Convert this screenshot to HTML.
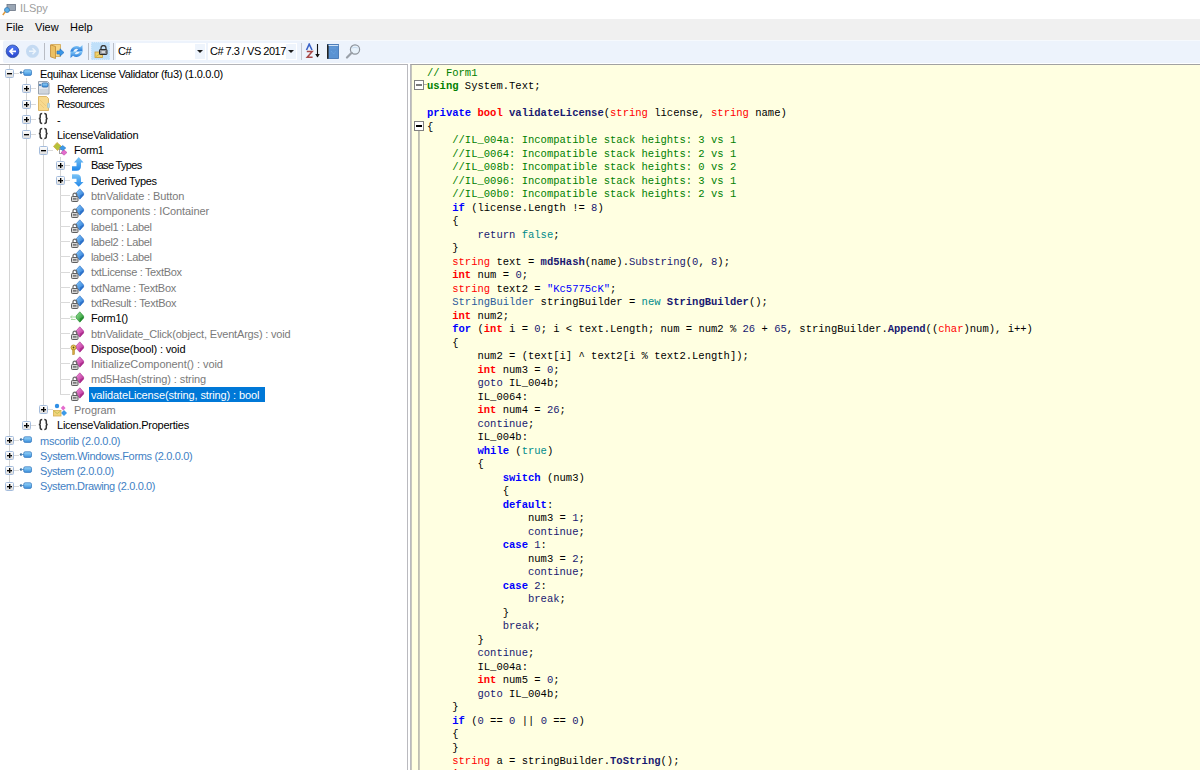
<!DOCTYPE html>
<html><head><meta charset="utf-8">
<style>
html,body{margin:0;padding:0;width:1200px;height:770px;overflow:hidden;background:#fff;}
body{position:relative;font-family:"Liberation Sans",sans-serif;}
.abs{position:absolute;}
#title{position:absolute;left:0;top:0;width:1200px;height:19px;background:#fff;}
#title .t{position:absolute;left:20px;top:2px;font-size:11px;color:#a0a0a0;letter-spacing:-0.1px;}
#menu{position:absolute;left:0;top:19px;width:1200px;height:21px;background:#f0f0f0;}
#menu span{position:absolute;top:2px;font-size:11px;color:#000;}
#tb{position:absolute;left:3px;top:40px;width:1197px;height:23px;background:#edf3fc;border-top:1px solid #f6f9fd;box-sizing:border-box;border-radius:2px 0 0 2px;}
.sep{position:absolute;top:43px;width:1px;height:17px;background:#b8bcc4;}
.combo{position:absolute;top:43px;height:17px;background:#fff;}
.combo .dd{position:absolute;right:1px;top:1px;width:10px;height:15px;background:#eef4fc;}
.combo .dd:after{content:"";position:absolute;left:2px;top:6px;border-left:3px solid transparent;border-right:3px solid transparent;border-top:3px solid #1e1e1e;}
.combo .ct{position:absolute;left:2px;top:2px;font-size:11px;color:#000;letter-spacing:-0.5px;white-space:nowrap;}
#treep{position:absolute;left:0;top:64px;width:408px;height:706px;background:#fff;border-top:1px solid #b4b4b8;border-right:1px solid #bababf;box-sizing:border-box;}
#codep{position:absolute;left:410px;top:64px;width:790px;height:706px;background:#ffffe1;border-top:1px solid #a2a2a2;border-left:1px solid #b8b8be;box-sizing:border-box;box-shadow:inset 1px 0 0 #c6c6bc;}
.cl{position:absolute;white-space:pre;font-family:"Liberation Mono",monospace;font-size:10.52px;line-height:0;color:#000;}
.c{color:#008000}
.u{color:#008000;font-weight:bold}
.k{color:#0000ff;font-weight:bold}
.t{color:#ff0000}
.tb{color:#ff0000;font-weight:bold}
.n{color:#191970}
.num{color:#191970}
.tl{color:#008b8b}
.m{color:#191970;font-weight:bold}
.mn{color:#191970}
.ty{color:#2b5b9b}
.s{color:#0000ff}
.fold{position:absolute;width:8px;height:8px;border:1px solid #808080;background:#fff;}
.fold i{position:absolute;left:1px;top:3px;width:6px;height:1.5px;background:#000;}
.vl{position:absolute;width:1px;background:#d4d4d4;}
.hl{position:absolute;height:1px;background:#dadada;}
.exp{position:absolute;width:7px;height:7px;border:1px solid #a4bcdc;border-radius:1.5px;background:linear-gradient(#fdfdfd,#dedede);}
.exp .h{position:absolute;left:1px;top:3px;width:5px;height:1px;background:#000;box-shadow:0 0.5px 0 #444;}
.exp .v{position:absolute;left:3px;top:1px;width:1px;height:5px;background:#000;box-shadow:0.5px 0 0 #444;}
.ic{position:absolute;}
.nsi{position:absolute;font-family:"Liberation Mono",monospace;font-weight:bold;font-size:12px;line-height:14px;color:#333;letter-spacing:-1px;}
.tt{position:absolute;white-space:pre;font-size:11px;line-height:14px;letter-spacing:-0.3px;}
.blk{color:#000}
.gry{color:#7a7a7a}
.asmc{color:#3f7fc4}
.sel{color:#fff;z-index:2;}
.selbg{position:absolute;background:#0078d7;z-index:1;}
</style></head><body>
<svg width="0" height="0" style="position:absolute"><defs>
<linearGradient id="gb" x1="0" y1="0" x2="1" y2="1"><stop offset="0" stop-color="#8fd0fa"/><stop offset="1" stop-color="#1f6fd6"/></linearGradient>
<linearGradient id="gp" x1="0" y1="0" x2="1" y2="1"><stop offset="0" stop-color="#f59ae0"/><stop offset="1" stop-color="#b01f8e"/></linearGradient>
<linearGradient id="gg" x1="0" y1="0" x2="1" y2="1"><stop offset="0" stop-color="#9be39a"/><stop offset="1" stop-color="#138a1e"/></linearGradient>
<linearGradient id="ga" x1="0" y1="0" x2="0" y2="1"><stop offset="0" stop-color="#9ad8fb"/><stop offset="1" stop-color="#3b8fdc"/></linearGradient>
<linearGradient id="gar" x1="0" y1="0" x2="0" y2="1"><stop offset="0" stop-color="#7cc4f6"/><stop offset="1" stop-color="#1f86e8"/></linearGradient>
</defs></svg>
<div id="title">
 <svg class="abs" style="left:2px;top:4px" width="14" height="12" viewBox="0 0 14 12">
  <rect x="5" y="0.5" width="8.5" height="6" fill="#9aa6b4" stroke="#6b7684" stroke-width=".8"/>
  <circle cx="5" cy="6" r="2.5" fill="#5fb0e8" stroke="#3a78b0" stroke-width=".8"/>
  <line x1="3.2" y1="7.8" x2="0.8" y2="11" stroke="#e09a3a" stroke-width="1.5"/>
 </svg>
 <div class="t">ILSpy</div>
</div>
<div id="menu">
 <span style="left:6px">File</span>
 <span style="left:35px">View</span>
 <span style="left:70px">Help</span>
</div>
<div id="tb"></div>
<!-- toolbar icons -->
<svg class="abs" style="left:5px;top:44px" width="16" height="15" viewBox="0 0 16 15">
 <defs><linearGradient id="bk" x1="0" y1="0" x2="0" y2="1"><stop offset="0" stop-color="#4f78f2"/><stop offset="1" stop-color="#2a48d0"/></linearGradient></defs>
 <circle cx="7.5" cy="7.3" r="6.3" fill="url(#bk)" stroke="#2a4aa0" stroke-width=".8"/>
 <path d="M11 7.3 H5 M8 4.3 L5 7.3 L8 10.3" fill="none" stroke="#fff" stroke-width="1.7"/>
</svg>
<svg class="abs" style="left:25px;top:44px" width="16" height="15" viewBox="0 0 16 15">
 <circle cx="7.5" cy="7.3" r="6.5" fill="#c4daf2"/>
 <path d="M4 7.3 H10 M7.5 4.3 L10.5 7.3 L7.5 10.3" fill="none" stroke="#eef5fc" stroke-width="1.4"/>
</svg>
<div class="sep" style="left:44px"></div>
<svg class="abs" style="left:50px;top:44px" width="15" height="15" viewBox="0 0 15 15">
 <path d="M1.5 0.5 H10.5 V12.5 H1.5 Z" fill="#f7d584" stroke="#d2a54e" stroke-width=".8"/>
 <path d="M0.5 0.8 L5.5 2.5 V14.5 L0.5 12.8 Z" fill="#ecc062" stroke="#c08a36" stroke-width=".8"/>
 <path d="M7 7 H10 V4.8 L14 8.5 L10 12.2 V10 H7 Z" fill="#3a96e6" stroke="#1f6cc0" stroke-width=".6"/>
</svg>
<svg class="abs" style="left:69px;top:44px" width="15" height="15" viewBox="0 0 15 15">
 <defs><linearGradient id="rf" x1="0" y1="0" x2="0" y2="1"><stop offset="0" stop-color="#8fd0fb"/><stop offset="1" stop-color="#1c72d6"/></linearGradient></defs>
 <path d="M1.5 8 A6 6 0 0 1 11 3.2 L13.5 1 V7.5 H7 L9.2 5.3 A3.2 3.2 0 0 0 4.3 8 Z" fill="url(#rf)"/>
 <path d="M13.5 7 A6 6 0 0 1 4 11.8 L1.5 14 V7.5 H8 L5.8 9.7 A3.2 3.2 0 0 0 10.7 7 Z" fill="url(#rf)"/>
</svg>
<div class="sep" style="left:88px"></div>
<div class="abs" style="left:91px;top:42px;width:19px;height:18px;background:#c0e0fa;border:1px dotted #d6eafc;box-sizing:border-box;"></div>
<svg class="abs" style="left:94px;top:45px" width="14" height="14" viewBox="0 0 14 14">
 <rect x="1" y="7" width="7.5" height="5.5" fill="#f2d070" stroke="#c79a36" stroke-width=".8"/>
 <path d="M2 11.5 L7 8" stroke="#b8c040" stroke-width=".8"/>
 <path d="M7 4.5 V3 a2.5 2.5 0 0 1 5 0 V4.5" fill="none" stroke="#3a3a3a" stroke-width="1.3"/>
 <rect x="5.5" y="4.5" width="7.5" height="5" rx=".6" fill="#8e9298" stroke="#2e2e2e" stroke-width="1"/>
 <rect x="7.5" y="6.2" width="3.5" height="1.6" fill="#e8e8e8"/>
</svg>
<div class="sep" style="left:113px"></div>
<div class="combo" style="left:116px;width:90px"><div class="ct">C#</div><div class="dd"></div></div>
<div class="combo" style="left:208px;width:89px"><div class="ct">C# 7.3 / VS 2017</div><div class="dd"></div></div>
<div class="sep" style="left:301px;background:#c4c8d0"></div>
<svg class="abs" style="left:305px;top:43px" width="17" height="16" viewBox="0 0 17 16">
 <path d="M1.5 7 L4.2 1.2 L7 7" fill="none" stroke="#3a62c8" stroke-width="1.6"/>
 <path d="M1.8 8.5 H7.2 L2.2 14.2 H7.6" fill="none" stroke="#a84848" stroke-width="1.5"/>
 <path d="M12.5 1 V14" stroke="#111" stroke-width="1.1"/>
 <path d="M10.2 11 L12.5 14.6 L14.8 11 Z" fill="#111"/>
</svg>
<svg class="abs" style="left:326px;top:44px" width="14" height="15" viewBox="0 0 14 15">
 <rect x="1.5" y="0.5" width="11" height="14" fill="#5a92d2" stroke="#3a6eae" stroke-width=".8"/>
 <rect x="1" y="0.5" width="1.6" height="14.2" fill="#222"/>
 <rect x="2.6" y="1" width="9.6" height="1" fill="#cfe2f6"/>
 <path d="M4.5 4 H10.5 M5 7 L7.5 10 L10 7" fill="none" stroke="#79b0ea" stroke-width=".7" stroke-dasharray="1 1"/>
</svg>
<svg class="abs" style="left:345px;top:43px" width="17" height="16" viewBox="0 0 17 16">
 <circle cx="10" cy="6.5" r="4.6" fill="#e8f2fb" stroke="#8e949c" stroke-width="1.2"/>
 <path d="M7.2 5 Q10 3.5 12.8 5" fill="none" stroke="#c8dcf0" stroke-width="1"/>
 <line x1="6.7" y1="9.8" x2="2" y2="14.5" stroke="#9aa0a8" stroke-width="2.2" stroke-linecap="round"/>
</svg>

<div id="treep"></div>
<div class="vl" style="left:60px;top:157.0px;height:237.0px"></div>
<div class="vl" style="left:43px;top:139.0px;height:270.0px"></div>
<div class="vl" style="left:26px;top:78.0px;height:347.0px"></div>
<div class="vl" style="left:9px;top:65.0px;height:421.0px"></div>
<div class="exp" style="left:5px;top:69px"><i class="h"></i></div>
<div class="hl" style="left:14px;top:73px;width:5px"></div>
<svg class="ic" style="left:19px;top:65px" width="16" height="16" viewBox="0 0 16 16"><circle cx="2" cy="7.5" r="1.2" fill="#3a6c9c"/><rect x="2.5" y="7" width="2.5" height="1" fill="#6a9ccc"/><rect x="4.7" y="4.8" width="7.8" height="5.6" rx="1.5" fill="url(#ga)" stroke="#3b7cc0" stroke-width=".8"/></svg>
<div class="tt blk" style="left:40px;top:66.80px;letter-spacing:-0.323px">Equihax License Validator (fu3) (1.0.0.0)</div>
<div class="exp" style="left:22px;top:84px"><i class="h"></i><i class="v"></i></div>
<div class="hl" style="left:31px;top:88px;width:5px"></div>
<svg class="ic" style="left:36px;top:80px" width="16" height="16" viewBox="0 0 16 16"><path d="M2.5 1.5 H11.5 L13 3 V14 H2.5 Z" fill="#e4e8ee" stroke="#98a2ae" stroke-width="1"/><rect x="3.5" y="9" width="8.5" height="4" fill="#cfd5dc"/><rect x="6" y="3" width="6" height="4" rx="1.2" fill="url(#ga)" stroke="#2c6cae" stroke-width=".9"/><circle cx="4" cy="5" r="1" fill="#2c6cae"/></svg>
<div class="tt blk" style="left:57px;top:82.08px;letter-spacing:-0.622px">References</div>
<div class="exp" style="left:22px;top:100px"><i class="h"></i><i class="v"></i></div>
<div class="hl" style="left:31px;top:104px;width:5px"></div>
<svg class="ic" style="left:36px;top:96px" width="16" height="16" viewBox="0 0 16 16"><path d="M2.5 0.5 H10.5 L12.5 2.5 V14.5 H2.5 Z" fill="#f7d98e" stroke="#dcb768" stroke-width="1"/><path d="M4 4 L10 10 M4 8 L8 12" stroke="#e9c677" stroke-width=".8"/><rect x="11.5" y="7" width="2" height="5" rx="1" fill="#b9dcea" stroke="#8fb4c4" stroke-width=".5"/></svg>
<div class="tt blk" style="left:57px;top:97.36px;letter-spacing:-0.613px">Resources</div>
<div class="exp" style="left:22px;top:115px"><i class="h"></i><i class="v"></i></div>
<div class="hl" style="left:31px;top:119px;width:5px"></div>
<svg class="ic" style="left:36px;top:111px" width="16" height="16" viewBox="0 0 16 16"><path d="M6.2 2.5 Q4.2 2.5 4.2 4.5 V6.5 Q4.2 7.5 2.8 7.5 Q4.2 7.5 4.2 8.5 V10.5 Q4.2 12.5 6.2 12.5" fill="none" stroke="#333" stroke-width="1.5"/><path d="M8.3 2.5 Q10.3 2.5 10.3 4.5 V6.5 Q10.3 7.5 11.7 7.5 Q10.3 7.5 10.3 8.5 V10.5 Q10.3 12.5 8.3 12.5" fill="none" stroke="#333" stroke-width="1.5"/></svg>
<div class="tt blk" style="left:57px;top:112.64px;letter-spacing:-0.300px">-</div>
<div class="exp" style="left:22px;top:130px"><i class="h"></i></div>
<div class="hl" style="left:31px;top:134px;width:5px"></div>
<svg class="ic" style="left:36px;top:126px" width="16" height="16" viewBox="0 0 16 16"><path d="M6.2 2.5 Q4.2 2.5 4.2 4.5 V6.5 Q4.2 7.5 2.8 7.5 Q4.2 7.5 4.2 8.5 V10.5 Q4.2 12.5 6.2 12.5" fill="none" stroke="#333" stroke-width="1.5"/><path d="M8.3 2.5 Q10.3 2.5 10.3 4.5 V6.5 Q10.3 7.5 11.7 7.5 Q10.3 7.5 10.3 8.5 V10.5 Q10.3 12.5 8.3 12.5" fill="none" stroke="#333" stroke-width="1.5"/></svg>
<div class="tt blk" style="left:57px;top:127.92px;letter-spacing:-0.244px">LicenseValidation</div>
<div class="exp" style="left:39px;top:146px"><i class="h"></i></div>
<div class="hl" style="left:48px;top:150px;width:5px"></div>
<svg class="ic" style="left:53px;top:142px" width="16" height="16" viewBox="0 0 16 16"><path d="M4 0.5 L8.5 4.5 L4.5 8.5 L0.5 4.5 Z" fill="#b5c23a" stroke="#d8a84a" stroke-width=".8"/><rect x="6.5" y="7.5" width="4" height="4" fill="none" stroke="#8a8a8a" stroke-width=".8"/><path d="M9.7 3.5 L12.8 6 L9.7 8.7 L6.6 6 Z" fill="#3d9ae8" stroke="#2a78c8" stroke-width=".6"/><path d="M11 8 L14 10.5 L11 13.2 L8 10.5 Z" fill="#e46ccd" stroke="#c04aa8" stroke-width=".6"/></svg>
<div class="tt blk" style="left:74px;top:143.20px;letter-spacing:-0.450px">Form1</div>
<div class="exp" style="left:56px;top:161px"><i class="h"></i><i class="v"></i></div>
<div class="hl" style="left:65px;top:165px;width:5px"></div>
<svg class="ic" style="left:70px;top:157px" width="16" height="16" viewBox="0 0 16 16"><path d="M8.75 0 L13.5 5.5 L11 5.5 L11 9 Q11 13.7 6.5 13.7 L2 13.7 L2 9.2 L6.5 9.2 L6.5 5.5 L4 5.5 Z" fill="url(#gar)"/></svg>
<div class="tt blk" style="left:91px;top:158.48px;letter-spacing:-0.678px">Base Types</div>
<div class="exp" style="left:56px;top:176px"><i class="h"></i><i class="v"></i></div>
<div class="hl" style="left:65px;top:180px;width:5px"></div>
<svg class="ic" style="left:70px;top:172px" width="16" height="16" viewBox="0 0 16 16"><path d="M2 2.3 L6.5 2.3 Q11 2.3 11 6.8 L11 10 L13.5 10 L8.75 14.8 L4 10 L6.5 10 L6.5 6.8 L2 6.8 Z" fill="url(#gar)"/></svg>
<div class="tt blk" style="left:91px;top:173.76px;letter-spacing:-0.342px">Derived Types</div>
<div class="hl" style="left:60px;top:195px;width:10px"></div>
<svg class="ic" style="left:70px;top:187px" width="16" height="16" viewBox="0 0 16 16"><path d="M9.8 1.8 L13.6 6 L13.6 8 L9.8 12.2 L6 8 L6 6 Z" fill="url(#gb)" stroke="#1d5fb8" stroke-width=".5"/><path d="M9.8 8.4 L13.6 6.4 L13.6 8 L9.8 12.2 Z" fill="#1d5fb8" opacity=".55"/><path d="M3 9.5 V8 a1.9 1.9 0 0 1 3.8 0 V9.5" fill="none" stroke="#6a6a6a" stroke-width="1.2"/><rect x="1.5" y="9.5" width="6.5" height="5" rx=".8" fill="#d4d4d4" stroke="#5e5e5e" stroke-width="1"/><rect x="3" y="11.3" width="3.5" height="1.2" fill="#555"/></svg>
<div class="tt gry" style="left:91px;top:189.04px;letter-spacing:-0.095px">btnValidate : Button</div>
<div class="hl" style="left:60px;top:211px;width:10px"></div>
<svg class="ic" style="left:70px;top:203px" width="16" height="16" viewBox="0 0 16 16"><path d="M9.8 1.8 L13.6 6 L13.6 8 L9.8 12.2 L6 8 L6 6 Z" fill="url(#gb)" stroke="#1d5fb8" stroke-width=".5"/><path d="M9.8 8.4 L13.6 6.4 L13.6 8 L9.8 12.2 Z" fill="#1d5fb8" opacity=".55"/><path d="M3 9.5 V8 a1.9 1.9 0 0 1 3.8 0 V9.5" fill="none" stroke="#6a6a6a" stroke-width="1.2"/><rect x="1.5" y="9.5" width="6.5" height="5" rx=".8" fill="#d4d4d4" stroke="#5e5e5e" stroke-width="1"/><rect x="3" y="11.3" width="3.5" height="1.2" fill="#555"/></svg>
<div class="tt gry" style="left:91px;top:204.32px;letter-spacing:-0.073px">components : IContainer</div>
<div class="hl" style="left:60px;top:226px;width:10px"></div>
<svg class="ic" style="left:70px;top:218px" width="16" height="16" viewBox="0 0 16 16"><path d="M9.8 1.8 L13.6 6 L13.6 8 L9.8 12.2 L6 8 L6 6 Z" fill="url(#gb)" stroke="#1d5fb8" stroke-width=".5"/><path d="M9.8 8.4 L13.6 6.4 L13.6 8 L9.8 12.2 Z" fill="#1d5fb8" opacity=".55"/><path d="M3 9.5 V8 a1.9 1.9 0 0 1 3.8 0 V9.5" fill="none" stroke="#6a6a6a" stroke-width="1.2"/><rect x="1.5" y="9.5" width="6.5" height="5" rx=".8" fill="#d4d4d4" stroke="#5e5e5e" stroke-width="1"/><rect x="3" y="11.3" width="3.5" height="1.2" fill="#555"/></svg>
<div class="tt gry" style="left:91px;top:219.60px;letter-spacing:-0.346px">label1 : Label</div>
<div class="hl" style="left:60px;top:241px;width:10px"></div>
<svg class="ic" style="left:70px;top:233px" width="16" height="16" viewBox="0 0 16 16"><path d="M9.8 1.8 L13.6 6 L13.6 8 L9.8 12.2 L6 8 L6 6 Z" fill="url(#gb)" stroke="#1d5fb8" stroke-width=".5"/><path d="M9.8 8.4 L13.6 6.4 L13.6 8 L9.8 12.2 Z" fill="#1d5fb8" opacity=".55"/><path d="M3 9.5 V8 a1.9 1.9 0 0 1 3.8 0 V9.5" fill="none" stroke="#6a6a6a" stroke-width="1.2"/><rect x="1.5" y="9.5" width="6.5" height="5" rx=".8" fill="#d4d4d4" stroke="#5e5e5e" stroke-width="1"/><rect x="3" y="11.3" width="3.5" height="1.2" fill="#555"/></svg>
<div class="tt gry" style="left:91px;top:234.88px;letter-spacing:-0.346px">label2 : Label</div>
<div class="hl" style="left:60px;top:256px;width:10px"></div>
<svg class="ic" style="left:70px;top:248px" width="16" height="16" viewBox="0 0 16 16"><path d="M9.8 1.8 L13.6 6 L13.6 8 L9.8 12.2 L6 8 L6 6 Z" fill="url(#gb)" stroke="#1d5fb8" stroke-width=".5"/><path d="M9.8 8.4 L13.6 6.4 L13.6 8 L9.8 12.2 Z" fill="#1d5fb8" opacity=".55"/><path d="M3 9.5 V8 a1.9 1.9 0 0 1 3.8 0 V9.5" fill="none" stroke="#6a6a6a" stroke-width="1.2"/><rect x="1.5" y="9.5" width="6.5" height="5" rx=".8" fill="#d4d4d4" stroke="#5e5e5e" stroke-width="1"/><rect x="3" y="11.3" width="3.5" height="1.2" fill="#555"/></svg>
<div class="tt gry" style="left:91px;top:250.16px;letter-spacing:-0.346px">label3 : Label</div>
<div class="hl" style="left:60px;top:272px;width:10px"></div>
<svg class="ic" style="left:70px;top:264px" width="16" height="16" viewBox="0 0 16 16"><path d="M9.8 1.8 L13.6 6 L13.6 8 L9.8 12.2 L6 8 L6 6 Z" fill="url(#gb)" stroke="#1d5fb8" stroke-width=".5"/><path d="M9.8 8.4 L13.6 6.4 L13.6 8 L9.8 12.2 Z" fill="#1d5fb8" opacity=".55"/><path d="M3 9.5 V8 a1.9 1.9 0 0 1 3.8 0 V9.5" fill="none" stroke="#6a6a6a" stroke-width="1.2"/><rect x="1.5" y="9.5" width="6.5" height="5" rx=".8" fill="#d4d4d4" stroke="#5e5e5e" stroke-width="1"/><rect x="3" y="11.3" width="3.5" height="1.2" fill="#555"/></svg>
<div class="tt gry" style="left:91px;top:265.44px;letter-spacing:-0.353px">txtLicense : TextBox</div>
<div class="hl" style="left:60px;top:287px;width:10px"></div>
<svg class="ic" style="left:70px;top:279px" width="16" height="16" viewBox="0 0 16 16"><path d="M9.8 1.8 L13.6 6 L13.6 8 L9.8 12.2 L6 8 L6 6 Z" fill="url(#gb)" stroke="#1d5fb8" stroke-width=".5"/><path d="M9.8 8.4 L13.6 6.4 L13.6 8 L9.8 12.2 Z" fill="#1d5fb8" opacity=".55"/><path d="M3 9.5 V8 a1.9 1.9 0 0 1 3.8 0 V9.5" fill="none" stroke="#6a6a6a" stroke-width="1.2"/><rect x="1.5" y="9.5" width="6.5" height="5" rx=".8" fill="#d4d4d4" stroke="#5e5e5e" stroke-width="1"/><rect x="3" y="11.3" width="3.5" height="1.2" fill="#555"/></svg>
<div class="tt gry" style="left:91px;top:280.72px;letter-spacing:-0.237px">txtName : TextBox</div>
<div class="hl" style="left:60px;top:302px;width:10px"></div>
<svg class="ic" style="left:70px;top:294px" width="16" height="16" viewBox="0 0 16 16"><path d="M9.8 1.8 L13.6 6 L13.6 8 L9.8 12.2 L6 8 L6 6 Z" fill="url(#gb)" stroke="#1d5fb8" stroke-width=".5"/><path d="M9.8 8.4 L13.6 6.4 L13.6 8 L9.8 12.2 Z" fill="#1d5fb8" opacity=".55"/><path d="M3 9.5 V8 a1.9 1.9 0 0 1 3.8 0 V9.5" fill="none" stroke="#6a6a6a" stroke-width="1.2"/><rect x="1.5" y="9.5" width="6.5" height="5" rx=".8" fill="#d4d4d4" stroke="#5e5e5e" stroke-width="1"/><rect x="3" y="11.3" width="3.5" height="1.2" fill="#555"/></svg>
<div class="tt gry" style="left:91px;top:296.00px;letter-spacing:-0.300px">txtResult : TextBox</div>
<div class="hl" style="left:60px;top:318px;width:10px"></div>
<svg class="ic" style="left:70px;top:310px" width="16" height="16" viewBox="0 0 16 16"><path d="M9.8 1.8 L13.6 6 L13.6 8 L9.8 12.2 L6 8 L6 6 Z" fill="url(#gg)" stroke="#137a1e" stroke-width=".5"/><path d="M9.8 8.4 L13.6 6.4 L13.6 8 L9.8 12.2 Z" fill="#137a1e" opacity=".55"/><path d="M1 7 H5.5 M1 9.5 H5.5" stroke="#a6d8a0" stroke-width="1.1"/><path d="M2 5.5 L0.5 7 L2 8.5" fill="none" stroke="#8ccc80" stroke-width=".8"/></svg>
<div class="tt blk" style="left:91px;top:311.28px;letter-spacing:-0.317px">Form1()</div>
<div class="hl" style="left:60px;top:333px;width:10px"></div>
<svg class="ic" style="left:70px;top:325px" width="16" height="16" viewBox="0 0 16 16"><path d="M9.8 1.8 L13.6 6 L13.6 8 L9.8 12.2 L6 8 L6 6 Z" fill="url(#gp)" stroke="#9a1c7c" stroke-width=".5"/><path d="M9.8 8.4 L13.6 6.4 L13.6 8 L9.8 12.2 Z" fill="#9a1c7c" opacity=".55"/><path d="M3 9.5 V8 a1.9 1.9 0 0 1 3.8 0 V9.5" fill="none" stroke="#6a6a6a" stroke-width="1.2"/><rect x="1.5" y="9.5" width="6.5" height="5" rx=".8" fill="#d4d4d4" stroke="#5e5e5e" stroke-width="1"/><rect x="3" y="11.3" width="3.5" height="1.2" fill="#555"/></svg>
<div class="tt gry" style="left:91px;top:326.56px;letter-spacing:-0.176px">btnValidate_Click(object, EventArgs) : void</div>
<div class="hl" style="left:60px;top:348px;width:10px"></div>
<svg class="ic" style="left:70px;top:340px" width="16" height="16" viewBox="0 0 16 16"><path d="M9.8 1.8 L13.6 6 L13.6 8 L9.8 12.2 L6 8 L6 6 Z" fill="url(#gp)" stroke="#9a1c7c" stroke-width=".5"/><path d="M9.8 8.4 L13.6 6.4 L13.6 8 L9.8 12.2 Z" fill="#9a1c7c" opacity=".55"/><circle cx="3.5" cy="7.5" r="2.5" fill="#f0d060" stroke="#a88420" stroke-width=".8"/><circle cx="3.5" cy="7.5" r=".9" fill="#5a4a10"/><rect x="2.7" y="9.8" width="1.8" height="4.8" fill="#d8a840" stroke="#a88420" stroke-width=".5"/></svg>
<div class="tt blk" style="left:91px;top:341.84px;letter-spacing:-0.142px">Dispose(bool) : void</div>
<div class="hl" style="left:60px;top:363px;width:10px"></div>
<svg class="ic" style="left:70px;top:355px" width="16" height="16" viewBox="0 0 16 16"><path d="M9.8 1.8 L13.6 6 L13.6 8 L9.8 12.2 L6 8 L6 6 Z" fill="url(#gp)" stroke="#9a1c7c" stroke-width=".5"/><path d="M9.8 8.4 L13.6 6.4 L13.6 8 L9.8 12.2 Z" fill="#9a1c7c" opacity=".55"/><path d="M3 9.5 V8 a1.9 1.9 0 0 1 3.8 0 V9.5" fill="none" stroke="#6a6a6a" stroke-width="1.2"/><rect x="1.5" y="9.5" width="6.5" height="5" rx=".8" fill="#d4d4d4" stroke="#5e5e5e" stroke-width="1"/><rect x="3" y="11.3" width="3.5" height="1.2" fill="#555"/></svg>
<div class="tt gry" style="left:91px;top:357.12px;letter-spacing:-0.048px">InitializeComponent() : void</div>
<div class="hl" style="left:60px;top:379px;width:10px"></div>
<svg class="ic" style="left:70px;top:371px" width="16" height="16" viewBox="0 0 16 16"><path d="M9.8 1.8 L13.6 6 L13.6 8 L9.8 12.2 L6 8 L6 6 Z" fill="url(#gp)" stroke="#9a1c7c" stroke-width=".5"/><path d="M9.8 8.4 L13.6 6.4 L13.6 8 L9.8 12.2 Z" fill="#9a1c7c" opacity=".55"/><path d="M3 9.5 V8 a1.9 1.9 0 0 1 3.8 0 V9.5" fill="none" stroke="#6a6a6a" stroke-width="1.2"/><rect x="1.5" y="9.5" width="6.5" height="5" rx=".8" fill="#d4d4d4" stroke="#5e5e5e" stroke-width="1"/><rect x="3" y="11.3" width="3.5" height="1.2" fill="#555"/></svg>
<div class="tt gry" style="left:91px;top:372.40px;letter-spacing:-0.096px">md5Hash(string) : string</div>
<div class="hl" style="left:60px;top:394px;width:10px"></div>
<svg class="ic" style="left:70px;top:386px" width="16" height="16" viewBox="0 0 16 16"><path d="M9.8 1.8 L13.6 6 L13.6 8 L9.8 12.2 L6 8 L6 6 Z" fill="url(#gp)" stroke="#9a1c7c" stroke-width=".5"/><path d="M9.8 8.4 L13.6 6.4 L13.6 8 L9.8 12.2 Z" fill="#9a1c7c" opacity=".55"/><path d="M3 9.5 V8 a1.9 1.9 0 0 1 3.8 0 V9.5" fill="none" stroke="#6a6a6a" stroke-width="1.2"/><rect x="1.5" y="9.5" width="6.5" height="5" rx=".8" fill="#d4d4d4" stroke="#5e5e5e" stroke-width="1"/><rect x="3" y="11.3" width="3.5" height="1.2" fill="#555"/></svg>
<div class="selbg" style="left:89px;top:387px;width:176px;height:15px"></div>
<div class="tt sel" style="left:91px;top:387.68px;letter-spacing:-0.127px">validateLicense(string, string) : bool</div>
<div class="exp" style="left:39px;top:405px"><i class="h"></i><i class="v"></i></div>
<div class="hl" style="left:48px;top:409px;width:5px"></div>
<svg class="ic" style="left:53px;top:401px" width="16" height="16" viewBox="0 0 16 16"><circle cx="4" cy="5" r="2.2" fill="#2f8fe6"/><path d="M10.2 4.6 L12.6 7 L10.2 9.6 L7.8 7 Z" fill="#e46ccd"/><path d="M11 9 L14 12 L11 15 L8 12 Z" fill="#3d9ae8"/><rect x="0.5" y="9.5" width="7.5" height="5.5" fill="#f2d37a" stroke="#d6ae52" stroke-width=".8"/><path d="M0.8 9.8 L4.2 12.6 L7.7 9.8" fill="none" stroke="#b9c04a" stroke-width=".8"/></svg>
<div class="tt gry" style="left:74px;top:402.96px;letter-spacing:-0.067px">Program</div>
<div class="exp" style="left:22px;top:421px"><i class="h"></i><i class="v"></i></div>
<div class="hl" style="left:31px;top:425px;width:5px"></div>
<svg class="ic" style="left:36px;top:417px" width="16" height="16" viewBox="0 0 16 16"><path d="M6.2 2.5 Q4.2 2.5 4.2 4.5 V6.5 Q4.2 7.5 2.8 7.5 Q4.2 7.5 4.2 8.5 V10.5 Q4.2 12.5 6.2 12.5" fill="none" stroke="#333" stroke-width="1.5"/><path d="M8.3 2.5 Q10.3 2.5 10.3 4.5 V6.5 Q10.3 7.5 11.7 7.5 Q10.3 7.5 10.3 8.5 V10.5 Q10.3 12.5 8.3 12.5" fill="none" stroke="#333" stroke-width="1.5"/></svg>
<div class="tt blk" style="left:57px;top:418.24px;letter-spacing:-0.237px">LicenseValidation.Properties</div>
<div class="exp" style="left:5px;top:436px"><i class="h"></i><i class="v"></i></div>
<div class="hl" style="left:14px;top:440px;width:5px"></div>
<svg class="ic" style="left:19px;top:432px" width="16" height="16" viewBox="0 0 16 16"><circle cx="2" cy="7.5" r="1.2" fill="#3a6c9c"/><rect x="2.5" y="7" width="2.5" height="1" fill="#6a9ccc"/><rect x="4.7" y="4.8" width="7.8" height="5.6" rx="1.5" fill="url(#ga)" stroke="#3b7cc0" stroke-width=".8"/></svg>
<div class="tt asmc" style="left:40px;top:433.52px;letter-spacing:-0.265px">mscorlib (2.0.0.0)</div>
<div class="exp" style="left:5px;top:451px"><i class="h"></i><i class="v"></i></div>
<div class="hl" style="left:14px;top:455px;width:5px"></div>
<svg class="ic" style="left:19px;top:447px" width="16" height="16" viewBox="0 0 16 16"><circle cx="2" cy="7.5" r="1.2" fill="#3a6c9c"/><rect x="2.5" y="7" width="2.5" height="1" fill="#6a9ccc"/><rect x="4.7" y="4.8" width="7.8" height="5.6" rx="1.5" fill="url(#ga)" stroke="#3b7cc0" stroke-width=".8"/></svg>
<div class="tt asmc" style="left:40px;top:448.80px;letter-spacing:-0.345px">System.Windows.Forms (2.0.0.0)</div>
<div class="exp" style="left:5px;top:466px"><i class="h"></i><i class="v"></i></div>
<div class="hl" style="left:14px;top:470px;width:5px"></div>
<svg class="ic" style="left:19px;top:462px" width="16" height="16" viewBox="0 0 16 16"><circle cx="2" cy="7.5" r="1.2" fill="#3a6c9c"/><rect x="2.5" y="7" width="2.5" height="1" fill="#6a9ccc"/><rect x="4.7" y="4.8" width="7.8" height="5.6" rx="1.5" fill="url(#ga)" stroke="#3b7cc0" stroke-width=".8"/></svg>
<div class="tt asmc" style="left:40px;top:464.08px;letter-spacing:-0.440px">System (2.0.0.0)</div>
<div class="exp" style="left:5px;top:482px"><i class="h"></i><i class="v"></i></div>
<div class="hl" style="left:14px;top:486px;width:5px"></div>
<svg class="ic" style="left:19px;top:478px" width="16" height="16" viewBox="0 0 16 16"><circle cx="2" cy="7.5" r="1.2" fill="#3a6c9c"/><rect x="2.5" y="7" width="2.5" height="1" fill="#6a9ccc"/><rect x="4.7" y="4.8" width="7.8" height="5.6" rx="1.5" fill="url(#ga)" stroke="#3b7cc0" stroke-width=".8"/></svg>
<div class="tt asmc" style="left:40px;top:479.36px;letter-spacing:-0.374px">System.Drawing (2.0.0.0)</div>
<div id="codep"></div>
<div class="vl" style="left:418px;top:130px;height:640px;width:2px;background:linear-gradient(90deg,#b8b8ac,#cfcfc0)"></div>
<div class="fold" style="left:414px;top:80px"><i style="background:#7a7a7a"></i></div>
<div class="abs" style="left:424px;top:84px;width:3px;height:1px;background:#b0b0b0"></div>
<div class="fold" style="left:414px;top:121px"><i></i></div>
<div class="cl" style="top:72.75px;left:427.00px"><span class="c">// Form1</span></div>
<div class="cl" style="top:86.25px;left:427.00px"><span class="u">using</span> System.Text;</div>
<div class="cl" style="top:99.75px;left:427.00px"></div>
<div class="cl" style="top:113.25px;left:427.00px"><span class="k">private</span> <span class="tb">bool</span> <span class="m">validateLicense</span>(<span class="t">string</span> license, <span class="t">string</span> name)</div>
<div class="cl" style="top:126.75px;left:427.00px">{</div>
<div class="cl" style="top:140.25px;left:452.25px"><span class="c">//IL_004a: Incompatible stack heights: 3 vs 1</span></div>
<div class="cl" style="top:153.75px;left:452.25px"><span class="c">//IL_0064: Incompatible stack heights: 2 vs 1</span></div>
<div class="cl" style="top:167.25px;left:452.25px"><span class="c">//IL_008b: Incompatible stack heights: 0 vs 2</span></div>
<div class="cl" style="top:180.75px;left:452.25px"><span class="c">//IL_0096: Incompatible stack heights: 3 vs 1</span></div>
<div class="cl" style="top:194.25px;left:452.25px"><span class="c">//IL_00b0: Incompatible stack heights: 2 vs 1</span></div>
<div class="cl" style="top:207.75px;left:452.25px"><span class="k">if</span> (license.Length != <span class="num">8</span>)</div>
<div class="cl" style="top:221.25px;left:452.25px">{</div>
<div class="cl" style="top:234.75px;left:477.50px"><span class="n">return</span> <span class="tl">false</span>;</div>
<div class="cl" style="top:248.25px;left:452.25px">}</div>
<div class="cl" style="top:261.75px;left:452.25px"><span class="t">string</span> text = <span class="m">md5Hash</span>(name).<span class="mn">Substring</span>(<span class="num">0</span>, <span class="num">8</span>);</div>
<div class="cl" style="top:275.25px;left:452.25px"><span class="tb">int</span> num = <span class="num">0</span>;</div>
<div class="cl" style="top:288.75px;left:452.25px"><span class="t">string</span> text2 = <span class="s">&quot;Kc5775cK&quot;</span>;</div>
<div class="cl" style="top:302.25px;left:452.25px"><span class="ty">StringBuilder</span> stringBuilder = <span class="tl">new</span> <span class="m">StringBuilder</span>();</div>
<div class="cl" style="top:315.75px;left:452.25px"><span class="tb">int</span> num2;</div>
<div class="cl" style="top:329.25px;left:452.25px"><span class="k">for</span> (<span class="tb">int</span> i = <span class="num">0</span>; i &lt; text.Length; num = num2 % <span class="num">26</span> + <span class="num">65</span>, stringBuilder.<span class="m">Append</span>((<span class="t">char</span>)num), i++)</div>
<div class="cl" style="top:342.75px;left:452.25px">{</div>
<div class="cl" style="top:356.25px;left:477.50px">num2 = (text[i] ^ text2[i % text2.Length]);</div>
<div class="cl" style="top:369.75px;left:477.50px"><span class="tb">int</span> num3 = <span class="num">0</span>;</div>
<div class="cl" style="top:383.25px;left:477.50px"><span class="n">goto</span> IL_004b;</div>
<div class="cl" style="top:396.75px;left:477.50px">IL_0064:</div>
<div class="cl" style="top:410.25px;left:477.50px"><span class="tb">int</span> num4 = <span class="num">26</span>;</div>
<div class="cl" style="top:423.75px;left:477.50px"><span class="n">continue</span>;</div>
<div class="cl" style="top:437.25px;left:477.50px">IL_004b:</div>
<div class="cl" style="top:450.75px;left:477.50px"><span class="k">while</span> (<span class="tl">true</span>)</div>
<div class="cl" style="top:464.25px;left:477.50px">{</div>
<div class="cl" style="top:477.75px;left:502.74px"><span class="k">switch</span> (num3)</div>
<div class="cl" style="top:491.25px;left:502.74px">{</div>
<div class="cl" style="top:504.75px;left:502.74px"><span class="k">default</span>:</div>
<div class="cl" style="top:518.25px;left:527.99px">num3 = <span class="num">1</span>;</div>
<div class="cl" style="top:531.75px;left:527.99px"><span class="n">continue</span>;</div>
<div class="cl" style="top:545.25px;left:502.74px"><span class="k">case</span> <span class="num">1</span>:</div>
<div class="cl" style="top:558.75px;left:527.99px">num3 = <span class="num">2</span>;</div>
<div class="cl" style="top:572.25px;left:527.99px"><span class="n">continue</span>;</div>
<div class="cl" style="top:585.75px;left:502.74px"><span class="k">case</span> <span class="num">2</span>:</div>
<div class="cl" style="top:599.25px;left:527.99px"><span class="n">break</span>;</div>
<div class="cl" style="top:612.75px;left:502.74px">}</div>
<div class="cl" style="top:626.25px;left:502.74px"><span class="n">break</span>;</div>
<div class="cl" style="top:639.75px;left:477.50px">}</div>
<div class="cl" style="top:653.25px;left:477.50px"><span class="n">continue</span>;</div>
<div class="cl" style="top:666.75px;left:477.50px">IL_004a:</div>
<div class="cl" style="top:680.25px;left:477.50px"><span class="tb">int</span> num5 = <span class="num">0</span>;</div>
<div class="cl" style="top:693.75px;left:477.50px"><span class="n">goto</span> IL_004b;</div>
<div class="cl" style="top:707.25px;left:452.25px">}</div>
<div class="cl" style="top:720.75px;left:452.25px"><span class="k">if</span> (<span class="num">0</span> == <span class="num">0</span> || <span class="num">0</span> == <span class="num">0</span>)</div>
<div class="cl" style="top:734.25px;left:452.25px">{</div>
<div class="cl" style="top:747.75px;left:452.25px">}</div>
<div class="cl" style="top:761.25px;left:452.25px"><span class="t">string</span> a = stringBuilder.<span class="m">ToString</span>();</div>
<div class="cl" style="top:773.55px;left:452.25px"><span class="tb">i</span></div>
</body></html>
